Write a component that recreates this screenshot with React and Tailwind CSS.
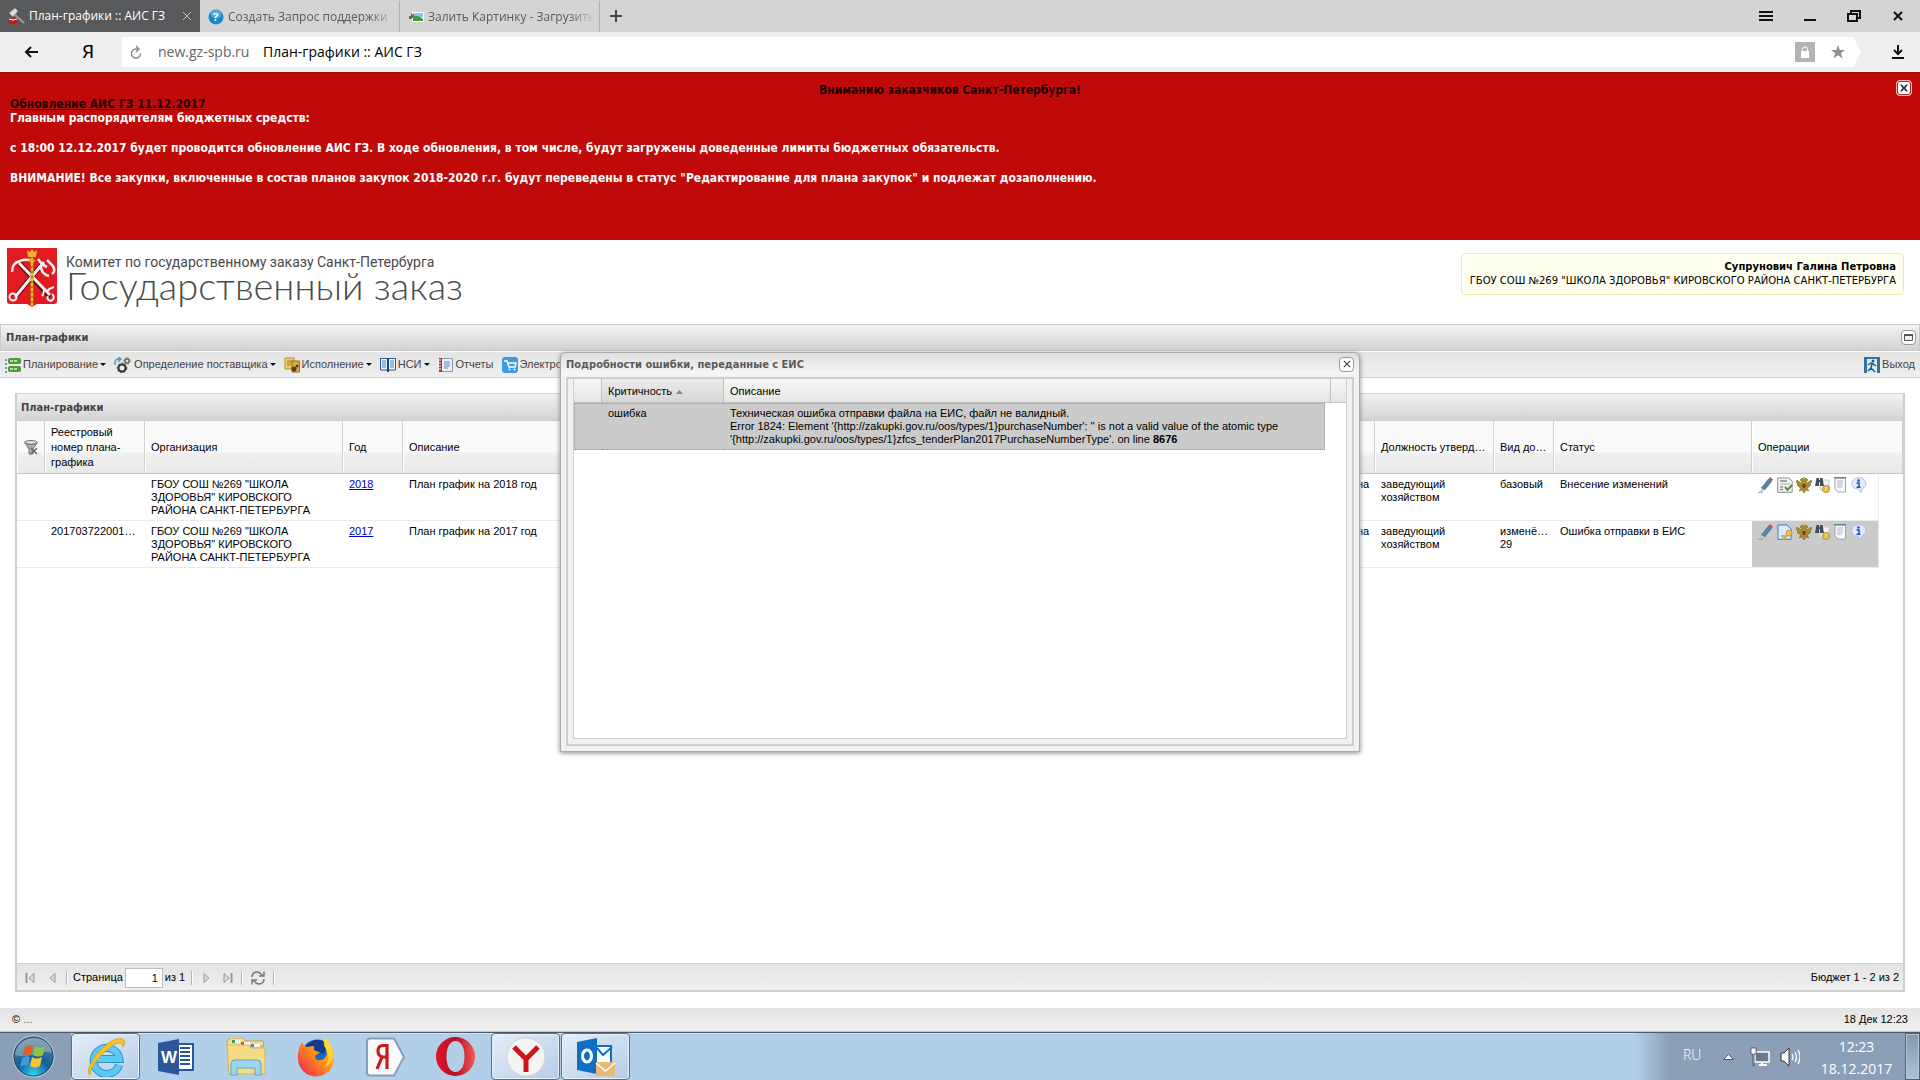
import React, { useState } from "react";

const taskbarItems = [
  { id: "ie", label: "Internet Explorer", open: true, icon: IconExplorer },
  { id: "word", label: "Word", icon: IconWord },
  { id: "files", label: "Проводник", icon: IconFolder },
  { id: "firefox", label: "Firefox", icon: IconFirefox },
  { id: "yandex", label: "Яндекс", icon: IconYandex },
  { id: "opera", label: "Opera", icon: IconOpera },
  { id: "ybrowser", label: "Яндекс.Браузер", open: true, icon: IconYBrowser },
  { id: "outlook", label: "Outlook", open: true, icon: IconOutlook },
];

const menuItems = [
  { label: "Планирование", icon: IconPlan, menu: true },
  { label: "Определение поставщика", icon: IconSupplier, menu: true },
  { label: "Исполнение", icon: IconExecution, menu: true },
  { label: "НСИ", icon: IconBook, menu: true },
  { label: "Отчеты", icon: IconReport },
  { label: "Электронный магазин", icon: IconCart },
];

const rows = [
  { number: "", year: "2018", kind: "базовый", version: "", status: "Внесение изменений", sent: false },
  { number: "201703722001722001", year: "2017", kind: "изменённый", version: "29", status: "Ошибка отправки в ЕИС", sent: true },
];

export default function App() {
  const [dialogOpen, setDialogOpen] = useState(true);
  const [bannerOpen, setBannerOpen] = useState(true);

  return (
    <div className="flex min-h-screen flex-col bg-white font-['Liberation_Sans',Arial,sans-serif] text-[11px] leading-[13px] text-black">
      <BrowserTabs />
      <AddressBar />
      <div className="relative flex flex-1 flex-col">
        {bannerOpen && <Banner onClose={() => setBannerOpen(false)} />}
        <SiteHeader />
        <PageBar />
        <Toolbar />
        <PlansPanel />
        <footer className="flex h-6 items-center justify-between border-b border-[#c8c8c8] bg-gradient-to-b from-[#e4e4e4] to-[#efefef] px-3">
          <span>© <a href="#about" className="text-[#5c7a3a]">...</a></span>
          <span>18 Дек 12:23</span>
        </footer>
        {dialogOpen && <ErrorDialog onClose={() => setDialogOpen(false)} />}
      </div>
      <Taskbar />
    </div>
  );
}

/* ---------- browser ---------- */

function BrowserTabs() {
  return (
    <header className="flex h-8 bg-[#d4d4d4] font-['Open_Sans','Noto_Sans',sans-serif] text-[12px] leading-4">
      <nav className="flex pt-px text-[#5a5a5a]">
        <div className="-mt-px flex w-[200px] items-center gap-1 bg-[#58595b] pl-2 pr-2 text-white">
          <IconHammer />
          <a href="#plans" className="flex-1 whitespace-nowrap">План-графики :: АИС ГЗ</a>
          <button aria-label="Закрыть вкладку"><Cross size={10} color="#c8c8c8" width={1} /></button>
        </div>
        <div className="flex w-[200px] items-center gap-1 border-r border-[#b0b0b0] pl-2 pr-1">
          <IconHelp />
          <a href="#support" className="flex-1 overflow-hidden whitespace-nowrap [mask-image:linear-gradient(to_right,black_85%,transparent)]">Создать Запрос поддержки</a>
        </div>
        <div className="flex w-[200px] items-center gap-1 border-r border-[#b0b0b0] pl-2 pr-1">
          <IconPicture />
          <a href="#upload" className="flex-1 overflow-hidden whitespace-nowrap [mask-image:linear-gradient(to_right,black_85%,transparent)]">Залить Картинку - Загрузить</a>
        </div>
      </nav>
      <button aria-label="Новая вкладка" className="flex w-8 items-center justify-center">
        <svg width="12" height="12"><path d="M6 0v12M0 6h12" stroke="#444" strokeWidth="2" /></svg>
      </button>
      <div className="ml-auto flex items-center">
        <button aria-label="Меню" className="flex w-11 justify-center">
          <svg width="14" height="10"><path d="M0 1h14M0 5h14M0 9h14" stroke="#111" strokeWidth="2" /></svg>
        </button>
        <button aria-label="Свернуть" className="flex w-11 justify-center">
          <svg width="12" height="10"><path d="M0 9h12" stroke="#111" strokeWidth="2" /></svg>
        </button>
        <button aria-label="Развернуть" className="flex w-11 justify-center">
          <svg width="14" height="12" fill="none" stroke="#111" strokeWidth="2"><path d="M1 4h9v7h-9zM4 4V1h9v7h-3" /></svg>
        </button>
        <button aria-label="Закрыть" className="flex w-11 justify-center"><Cross size={10} color="#111" width={2} /></button>
      </div>
    </header>
  );
}

function AddressBar() {
  return (
    <div className="flex h-10 items-center bg-[#efefef] font-['Open_Sans','Noto_Sans',sans-serif] text-[14px] leading-5">
      <button aria-label="Назад" className="flex w-[62px] justify-center">
        <svg width="14" height="12" fill="none" stroke="#111" strokeWidth="2"><path d="M14 6H2M7 1L2 6l5 5" /></svg>
      </button>
      <button aria-label="Яндекс" className="w-[52px] text-center font-['Roboto',sans-serif] text-[19px]">Я</button>
      <div className="ml-2 flex h-[30px] flex-1 items-center gap-3 bg-white pl-2 [clip-path:polygon(0_0,calc(100%-8px)_0,100%_50%,calc(100%-8px)_100%,0_100%)]">
        <button aria-label="Обновить">
          <svg width="12" height="14" fill="none" stroke="#8a8a8a" strokeWidth="1.5"><path d="M10.5 8.500a4.500 4.500 0 1 1-4.500-4.500h2M6 1l3 3-3 3" /></svg>
        </button>
        <label htmlFor="url" className="w-[97px] whitespace-nowrap pl-1 text-[#666]">new.gz-spb.ru</label>
        <input id="url" defaultValue="План-графики :: АИС ГЗ" className="flex-1 bg-transparent text-black outline-none" />
        <button aria-label="Защищено" className="mr-1 flex h-5 w-5 items-center justify-center bg-[#b4b4b4]">
          <svg width="8" height="12"><path d="M0 5h8v7H0z" fill="#fff" /><path d="M1.500 5V3.500a2.500 2.500 0 0 1 5 0V5" fill="none" stroke="#fff" /></svg>
        </button>
        <button aria-label="В закладки" className="mr-4">
          <svg width="14" height="14" viewBox="0 0 14 14"><path d="M7 0l1.800 4.900H14L9.900 8l1.600 5.400L7 10.300l-4.500 3.100L4.100 8 0 4.900h5.200z" fill="#8f8f8f" /></svg>
        </button>
      </div>
      <button aria-label="Загрузки" className="flex w-[59px] justify-center pl-[14px]">
        <svg width="12" height="14" fill="none" stroke="#111" strokeWidth="2"><path d="M6 0v8M2 5l4 4 4-4M0 13h12" /></svg>
      </button>
    </div>
  );
}

/* ---------- page ---------- */

function Banner({ onClose }) {
  return (
    <section className="relative h-[168px] border-t border-[#a00c0c] bg-[#c00909] px-[10px] pt-[10px] pr-[30px] font-['DejaVu_Sans_Condensed','DejaVu_Sans',sans-serif] text-[12px] font-bold leading-[15px] text-white">
      <h2 className="text-center leading-[14px] text-[#1c0000]">Вниманию заказчиков Санкт-Петербурга!</h2>
      <p className="leading-[14px] text-[#2a0000]"><a href="#update" className="underline">Обновление АИС ГЗ 11.12.2017</a></p>
      <p>Главным распорядителям бюджетных средств:</p>
      <p className="mt-[15px]">с 18:00 12.12.2017 будет проводится обновление АИС ГЗ. В ходе обновления, в том числе, будут загружены доведенные лимиты бюджетных обязательств.</p>
      <p className="mt-[15px]">ВНИМАНИЕ! Все закупки, включенные в состав планов закупок 2018-2020 г.г. будут переведены в статус "Редактирование для плана закупок" и подлежат дозаполнению.</p>
      <button aria-label="Закрыть" onClick={onClose}
        className="absolute right-2 top-[7px] flex h-4 w-4 items-center justify-center rounded-sm border border-[#f3b0b0] bg-white outline -outline-offset-2 outline-[#933]">
        <Cross size={8} color="#222" width={2} />
      </button>
    </section>
  );
}

function SiteHeader() {
  return (
    <div className="flex h-[84px] items-start justify-between pl-[7px] pr-4">
      <div className="flex gap-2 pt-2">
        <Emblem />
        <div className="pt-[5px] text-[#4a4a4a]">
          <p className="font-['Roboto','Open_Sans',sans-serif] text-[14px] leading-[18px]">Комитет по государственному заказу Санкт-Петербурга</p>
          <h1 className="font-['Lato','Open_Sans',sans-serif] text-[38px] font-light leading-7">Государственный заказ</h1>
        </div>
      </div>
      <div className="mt-[13px] rounded-sm border border-[#efe9a6] bg-[#fffff0] py-[6px] pl-2 pr-[7px] text-right font-['DejaVu_Sans',sans-serif] text-[10px] leading-[14px]">
        <p className="font-bold">Супрунович Галина Петровна</p>
        <p>ГБОУ СОШ №269 "ШКОЛА ЗДОРОВЬЯ" КИРОВСКОГО РАЙОНА САНКТ-ПЕТЕРБУРГА</p>
      </div>
    </div>
  );
}

function PageBar() {
  return (
    <div className="flex h-[27px] items-center justify-between border border-[#cacaca] bg-gradient-to-b from-[#f2f2f2] to-[#d3d3d3] pl-[5px] pr-[3px]">
      <h2 className="font-['DejaVu_Sans_Condensed','DejaVu_Sans',sans-serif] text-[11px] font-bold text-[#444]">План-графики</h2>
      <button aria-label="Развернуть" className="flex h-[15px] w-[15px] items-center justify-center rounded-sm border border-[#999] bg-white">
        <svg width="9" height="7"><path d="M.5 1h8v5.500h-8z" fill="#eee" stroke="#555" /><path d="M0 1h9" stroke="#555" strokeWidth="2" /></svg>
      </button>
    </div>
  );
}

function Toolbar() {
  return (
    <nav className="flex h-[27px] items-center justify-between border-y border-t-white border-b-[#d0d0d0] bg-gradient-to-b from-[#e4e4e4] to-[#efefef] pl-[5px] pr-[5px] text-[#444]">
      <div className="flex items-center gap-2">
        {menuItems.map(({ label, icon: Icon, menu }) => (
          <button key={label} className="flex items-center gap-[2px] whitespace-nowrap">
            <Icon />
            {label}
            {menu && <svg width="6" height="3"><path d="M0 0h6L3 3z" fill="#111" /></svg>}
          </button>
        ))}
      </div>
      <button className="flex items-center gap-[2px]"><IconExit />Выход</button>
    </nav>
  );
}

function HeadCell({ children, ...props }) {
  return (
    <th {...props} className="h-[53px] truncate border-b border-r border-b-[#c5c5c5] border-r-[#cfcfcf] bg-[linear-gradient(#fafafa_60%,#f0f0f0_61%,#e8e8e8)] px-[6px] text-left align-middle font-normal leading-[15px] shadow-[inset_1px_0_#fff]">
      {children}
    </th>
  );
}

function Cell({ children, className = "" }) {
  return <td className={`h-[47px] border-b border-[#ebebeb] px-[6px] align-top ${className}`}><div className="pt-1">{children}</div></td>;
}

function PlansPanel() {
  return (
    <main className="mx-[15px] mb-4 mt-[15px] flex flex-1 flex-col border-2 border-t border-[#cfcfcf]">
      <h3 className="flex h-[27px] items-center border-b border-[#cfcfcf] bg-gradient-to-b from-[#f2f2f2] to-[#d3d3d3] pl-1 font-['DejaVu_Sans_Condensed','DejaVu_Sans',sans-serif] text-[11px] font-bold text-[#444]">План-графики</h3>
      <table className="w-full table-fixed border-separate border-spacing-0">
        <colgroup>
          <col className="w-7" />
          <col className="w-[100px]" />
          <col className="w-[198px]" />
          <col className="w-[60px]" />
          <col />
          <col className="w-[164px]" />
          <col className="w-[119px]" />
          <col className="w-[60px]" />
          <col className="w-[198px]" />
          <col className="w-[127px]" />
          <col className="w-6" />
        </colgroup>
        <thead>
          <tr>
            <HeadCell aria-label="Фильтр"><IconFilter /></HeadCell>
            <HeadCell><span className="block whitespace-normal">Реестровый номер плана-графика</span></HeadCell>
            <HeadCell>Организация</HeadCell>
            <HeadCell>Год</HeadCell>
            <HeadCell>Описание</HeadCell>
            <HeadCell>Утверждающее лицо</HeadCell>
            <HeadCell>Должность утвердившего</HeadCell>
            <HeadCell>Вид документа</HeadCell>
            <HeadCell>Статус</HeadCell>
            <HeadCell colSpan={2}>Операции</HeadCell>
          </tr>
        </thead>
        <tbody>
          {rows.map((r) => (
            <tr key={r.year}>
              <Cell />
              <Cell><span className="block truncate">{r.number}</span></Cell>
              <Cell>ГБОУ СОШ №269 "ШКОЛА ЗДОРОВЬЯ" КИРОВСКОГО РАЙОНА САНКТ-ПЕТЕРБУРГА</Cell>
              <Cell><a href={`#plan-${r.year}`} className="text-[#0000cc] underline">{r.year}</a></Cell>
              <Cell>План график на {r.year} год</Cell>
              <Cell className="whitespace-nowrap">Супрунович Галина Петровна</Cell>
              <Cell>заведующий хозяйством</Cell>
              <Cell className="pr-0"><span className="block truncate">{r.kind}</span>{r.version}</Cell>
              <Cell>{r.status}</Cell>
              <Cell className={r.sent ? "border-r bg-[#cacaca]" : "border-r"}>
                <div className="-mt-px flex gap-[3px]">
                  <button aria-label="Редактировать"><IconPencil /></button>
                  <button aria-label="Документ">{r.sent ? <IconDocKey /> : <IconDocCheck />}</button>
                  <button aria-label="Отправить в ЕИС"><IconEagle /></button>
                  <button aria-label="Поиск"><IconBinoculars /></button>
                  <button aria-label="Печать"><IconSheet /></button>
                  <button aria-label="Сведения"><IconInfo /></button>
                </div>
              </Cell>
            </tr>
          ))}
        </tbody>
      </table>
      <div className="mt-auto flex h-[27px] items-center justify-between border-t border-[#cfcfcf] bg-gradient-to-b from-[#e4e4e4] to-[#efefef] pl-2 pr-1 pt-px">
        <div className="flex items-center">
          <button aria-label="Первая" className="w-[21px]"><PageArrow back edge /></button>
          <button aria-label="Предыдущая" className="w-5"><PageArrow back /></button>
          <Divider />
          <label htmlFor="page" className="ml-[5px] mr-[2px]">Страница</label>
          <input id="page" defaultValue="1" className="h-5 w-[38px] border border-[#bdbdbd] bg-white px-1 text-right outline-none" />
          <span className="ml-[2px] mr-[6px]">из 1</span>
          <Divider />
          <button aria-label="Следующая" className="ml-[10px] w-5"><PageArrow /></button>
          <button aria-label="Последняя" className="w-[18px]"><PageArrow edge /></button>
          <Divider />
          <button aria-label="Обновить" className="mx-[7px]"><IconRefresh /></button>
          <Divider />
        </div>
        <span>Бюджет 1 - 2 из 2</span>
      </div>
    </main>
  );
}

function Divider() {
  return <span className="h-[14px] w-[2px] border-l border-[#b5b5b5] bg-white" />;
}

function PageArrow({ back, edge }) {
  return (
    <svg width="10" height="12" className={back ? "rotate-180" : ""}>
      <path d="M1 1.500L6 6 1 10.500z" fill="#d8d8d8" stroke="#999" />
      {edge && <path d="M8.500 1v10" stroke="#999" strokeWidth="2" />}
    </svg>
  );
}

function ErrorDialog({ onClose }) {
  return (
    <div className="pointer-events-none absolute inset-0 flex items-center justify-center">
      <div role="dialog" aria-label="Подробности ошибки" className="pointer-events-auto flex h-[400px] w-[800px] flex-col rounded-t-md border border-[#aaa] bg-[#f1f1f1] bg-[linear-gradient(#dedede,#f6f6f6_20px,#f1f1f1_26px)] p-[5px] pt-0 shadow-[0_1px_5px_#888]">
        <div className="flex h-6 items-center justify-between pb-[2px]">
          <h3 className="font-['DejaVu_Sans_Condensed','DejaVu_Sans',sans-serif] text-[11px] font-bold text-[#5a5a5a]">Подробности ошибки, переданные с ЕИС</h3>
          <button aria-label="Закрыть" onClick={onClose} className="flex h-[15px] w-[15px] items-center justify-center rounded-sm border border-[#999] bg-white">
            <Cross size={8} color="#444" width={1.5} />
          </button>
        </div>
        <div className="flex flex-1 flex-col border-2 border-[#cfcfcf] bg-[#f1f1f1] px-[5px] pb-[5px]">
          <div className="flex-1 border border-t-0 border-[#cfcfcf] bg-white">
            <table className="w-full table-fixed border-separate border-spacing-0">
              <colgroup>
                <col className="w-7" />
                <col className="w-[122px]" />
                <col />
                <col className="w-[5px]" />
                <col className="w-4" />
              </colgroup>
              <thead>
                <tr className="h-6 bg-gradient-to-b from-[#f7f7f7] to-[#e4e4e4] text-left">
                  <th aria-label="Номер" className="border-b border-r border-[#c0c0c0] font-normal" />
                  <th className="border-b border-r border-[#c0c0c0] bg-gradient-to-b from-[#ededed] to-[#d6d6d6] px-[6px] pt-[2px] font-normal">
                    <span className="flex items-center gap-1">Критичность <svg width="7" height="4"><path d="M0 4h7L3.500 0z" fill="#888" /></svg></span>
                  </th>
                  <th colSpan={2} className="border-b border-[#c0c0c0] px-[6px] pt-[2px] font-normal">Описание</th>
                  <th aria-label="Прокрутка" className="border-b border-l border-[#c0c0c0]" />
                </tr>
              </thead>
              <tbody>
                <tr className="h-[47px] bg-[#cbcbcb]">
                  <td className="border-y border-l border-dotted border-[#999]" />
                  <td className="border-y border-dotted border-[#999] px-[6px] pt-[3px] align-top">ошибка</td>
                  <td className="border-y border-r border-dotted border-[#999] px-[6px] pt-[3px] align-top">
                    Техническая ошибка отправки файла на ЕИС, файл не валидный.<br />
                    Error 1824: Element '{"{"}http://zakupki.gov.ru/oos/types/1{"}"}purchaseNumber': '' is not a valid value of the atomic type<br />
                    '{"{"}http://zakupki.gov.ru/oos/types/1{"}"}zfcs_tenderPlan2017PurchaseNumberType'. on line <b>8676</b>
                  </td>
                  <td colSpan={2} className="bg-white" />
                </tr>
              </tbody>
            </table>
          </div>
        </div>
      </div>
    </div>
  );
}

/* ---------- desktop ---------- */

function Taskbar() {
  return (
    <div className="flex h-12 border-t border-[#4a5a6c] bg-[#b2cfea] shadow-[inset_0_1px_#d5e4f2]">
      <button aria-label="Пуск" className="flex w-[71px] items-center bg-[#8b9fb6] pl-3"><IconStart /></button>
      <div className="flex">
        {taskbarItems.map(({ id, label, open, icon: Icon }) => (
          <button key={id} aria-label={label}
            className={`mr-px flex w-[69px] items-center justify-center ${open ? "rounded-sm border border-[#5a6e85] bg-gradient-to-br from-[#e4eef8] to-[#b5cde6] shadow-[inset_0_0_0_1px_#e8f1fa]" : ""}`}>
            <Icon />
          </button>
        ))}
      </div>
      <div className="ml-auto flex w-[285px] items-stretch bg-[linear-gradient(to_right,#b2cfea,#8b9fb6_35px)] font-['Open_Sans','Noto_Sans',sans-serif] text-[14px] leading-[22px] text-white">
        <span className="ml-12 w-8 pt-[12px] font-light leading-5">RU</span>
        <button aria-label="Скрытые значки" className="w-[35px] pl-2"><svg width="11" height="6"><path d="M.5 5.500h10L5.500.5z" fill="#fff" stroke="#4b5c70" /></svg></button>
        <span className="flex items-center gap-[10px]">
          <svg width="20" height="20"><path d="M5 5h14v10H5z" fill="#68798c" stroke="#fff" strokeWidth="1.500" /><path d="M9 18h8M12 16v2" stroke="#fff" strokeWidth="2" /><path d="M1 1h5v6H4v12H3V7H1z" fill="#fff" stroke="#333" strokeWidth=".7" /></svg>
          <svg width="20" height="20" fill="none"><path d="M1 6h3l5-5v18l-5-5H1z" fill="#fff" stroke="#333" /><path d="M12 7q2 3 0 6M15 5q3 5 0 10M18 3q4 7 0 14" stroke="#fff" strokeWidth="1.300" /></svg>
        </span>
        <span className="flex flex-1 flex-col items-center pl-2 pt-[3px]"><span>12:23</span><span>18.12.2017</span></span>
        <button aria-label="Показать рабочий стол" className="w-[15px] border border-[#4f6176] bg-gradient-to-b from-[#8397ad] to-[#aec3d8] shadow-[inset_0_0_0_1px_#b9c8d8]" />
      </div>
    </div>
  );
}

/* ---------- drawings ---------- */

function Cross({ size, color, width }) {
  return <svg width={size} height={size} viewBox="0 0 10 10"><path d="M1 1l8 8M9 1l-8 8" stroke={color} strokeWidth={width} /></svg>;
}

function Emblem() {
  return (
    <svg width="51" height="60" viewBox="0 0 51 60">
      <path d="M0 0h50v53q0 3-3 3H30l-5 3-5-3H3q-3 0-3-3z" fill="#e21b22" />
      <g fill="none" stroke="#5b0b0d" strokeWidth="5"><path d="M8 49L37 14M43 49L12 15" /></g>
      <g fill="none" stroke="#f4f0f0" strokeWidth="3">
        <path d="M8 49L37 14M43 47L12 15" />
        <path d="M5 24q0-9 8-11 4-2 10-1M31 11q4 6 9 8M40 12l6 6q3 5-1 8M34 18q0 8 8 10" strokeWidth="2.500" />
        <circle cx="6" cy="49" r="3.500" strokeWidth="2" />
        <path d="M37 40q0 6-2 8M47 39q-4 1-7 4M45 46q4 4-1 7-5-1-3-5" strokeWidth="2" />
      </g>
      <path d="M25 5v53" stroke="#b8860f" strokeWidth="3" />
      <path d="M25 5v53" stroke="#f3d13d" strokeWidth="1.500" strokeDasharray="3 2" />
      <path d="M20 2l3 2 2-3 2 3 3-2-1 7h-8zM21 12h8l-4 4z" fill="#e9b528" />
    </svg>
  );
}

function IconHammer() {
  return <svg width="17" height="18"><path d="M4 5l12 11" stroke="#9a9a9a" strokeWidth="2" /><path d="M1 6l6-5 3 3-5 6z" fill="#ddd" stroke="#888" /><path d="M1 12l4-2 4 3v4H1z" fill="#c31a1a" /><path d="M1 12l4 1 4-1" stroke="#fff" fill="none" /></svg>;
}

function IconHelp() {
  return <svg width="16" height="16"><circle cx="8" cy="8" r="7.500" fill="#1b86c6" /><ellipse cx="8" cy="5" rx="5.500" ry="4" fill="#7cc6ee" opacity=".6" /><text x="5" y="12" fontSize="11" fontWeight="bold" fill="#fff">?</text></svg>;
}

function IconPicture() {
  return <svg width="16" height="14"><path d="M4 2h12v10H4z" fill="#fff" /><path d="M5 3h10v4H5z" fill="#85c4f2" /><path d="M5 7q5-3 10 2v2H5z" fill="#3d9a34" /><path d="M1 9V6h2V3l4 3-4 3z" fill="#666" /></svg>;
}

function IconPlan() {
  return (
    <svg width="16" height="16">
      <path d="M0 3h2M0 7h2M0 11h2M0 15h2" stroke="#4b7cab" strokeWidth="1.500" />
      <rect x="3" y="1" width="13" height="6" rx="2" fill="#4e9a36" /><rect x="3" y="9" width="13" height="6" rx="2" fill="#4e9a36" />
      <path d="M5 4h8M5 12h8" stroke="#b5dc9d" strokeWidth="2" strokeDasharray="3 1" />
    </svg>
  );
}

function IconSupplier() {
  return (
    <svg width="18" height="16" fill="none">
      <path d="M1 8V5q0-3 5-3M4 0l3 2-3 3" stroke="#559ac9" strokeWidth="1.500" />
      <circle cx="8" cy="11" r="3.500" stroke="#333" strokeWidth="2" /><circle cx="8" cy="11" r="4.800" stroke="#333" strokeDasharray="2 1.500" />
      <circle cx="13" cy="4" r="2" stroke="#666" strokeWidth="1.500" /><circle cx="13" cy="4" r="3.200" stroke="#666" strokeDasharray="1.500 1" />
    </svg>
  );
}

function IconExecution() {
  return (
    <svg width="16" height="16">
      <path d="M1 1h9v11H1z" fill="#f0cf68" stroke="#b78c2c" /><path d="M3 4h5M3 6h5M3 8h4" stroke="#a57a1e" />
      <path d="M8 4h7.500v11H8z" fill="#d9ae45" stroke="#936d1d" /><circle cx="10" cy="12" r="2.500" fill="#6d3415" /><circle cx="13" cy="9" r="1.500" fill="#6d3415" />
    </svg>
  );
}

function IconBook() {
  return (
    <svg width="16" height="16">
      <path d="M.5 1.500H8v13L7 13H.5zM8 1.500h7.500V13H9l-1 1.500z" fill="#e8f2fb" stroke="#27578e" />
      <path d="M2 4h4M2 6h4M2 8h4M2 10h4M10 4h4M10 6h4M10 8h4M10 10h4" stroke="#4b86c4" /><path d="M8 1v14" stroke="#1f466f" strokeWidth="2" />
    </svg>
  );
}

function IconReport() {
  return (
    <svg width="16" height="16">
      <path d="M3.500 1.500h11v13h-11z" fill="#e9f1fb" stroke="#7e96b8" /><path d="M6 5h6M6 7h6M6 9h6M6 11h4" stroke="#6586b8" />
      <path d="M1 1h3v14H1z" fill="#c22a2a" /><path d="M0 3h3M0 6h3M0 9h3M0 12h3" stroke="#fff" />
    </svg>
  );
}

function IconCart() {
  return (
    <svg width="16" height="16">
      <rect width="16" height="16" rx="3" fill="#3d9be4" />
      <path d="M2 4h3l2 6h6l1-4H6" fill="none" stroke="#fff" strokeWidth="1.500" /><circle cx="7.500" cy="12.500" r="1" fill="#fff" /><circle cx="12.500" cy="12.500" r="1" fill="#fff" />
    </svg>
  );
}

function IconExit() {
  return (
    <svg width="16" height="16">
      <path d="M0 0h16v16H0z" fill="#34749f" /><path d="M3 2h10v14H3z" fill="#dcebf4" />
      <circle cx="9" cy="4" r="1.500" fill="#1f5d89" /><path d="M4 8l3-2 2 1 3 2M8 7l-1 4-3 3M7 11l4 4" fill="none" stroke="#1f5d89" strokeWidth="1.500" />
    </svg>
  );
}

function IconFilter() {
  return (
    <svg width="16" height="16">
      <ellipse cx="8" cy="3.500" rx="6.500" ry="2" fill="#ddd" stroke="#777" /><path d="M2 4l4 6v5h4v-5l4-6q-6 3-12 0z" fill="#aaa" stroke="#777" />
      <path d="M8 9l6 6M14 9l-6 6" stroke="#666" strokeWidth="1.500" />
    </svg>
  );
}

function IconPencil() {
  return (
    <svg width="16" height="16">
      <path d="M3.500 11L10.500 2l3 2.500L6.500 13z" fill="#4f88b3" stroke="#37617f" strokeWidth=".7" />
      <path d="M10.500 2l1.500-2 3 2.500L13.500 4.500z" fill="#c4574a" />
      <path d="M3.500 11l3 2-4 2z" fill="#e4c79a" /><path d="M0 15.500q3-1 5 0" stroke="#5ba2d6" fill="none" />
    </svg>
  );
}

function IconDocCheck() {
  return (
    <svg width="16" height="16">
      <path d="M.7 1h11l3.500 3v11.300H.7z" fill="#f5f5f5" stroke="#8d8d8d" /><path d="M3 4h7M3 10h3M3 12.500h3" stroke="#8a8a8a" strokeWidth="1.500" /><path d="M3 7h10" stroke="#aaa" />
      <path d="M8 10l2.500 3L15 8" fill="none" stroke="#5c8f2f" strokeWidth="2" />
    </svg>
  );
}

function IconDocKey() {
  return (
    <svg width="16" height="16">
      <path d="M1 1h9l4 4v10.300H1z" fill="#dcecfb" stroke="#3d7cc0" /><path d="M4 12h5" stroke="#3d7cc0" />
      <circle cx="12" cy="9" r="3" fill="#f0c34c" stroke="#b8862a" strokeWidth=".7" /><path d="M10.500 11L6 15.500" stroke="#e0ac37" strokeWidth="2.500" />
    </svg>
  );
}

function IconEagle() {
  return (
    <svg width="16" height="16">
      <path d="M8 3L6 1 4 3l2 2-1 1-4-3-1 2 2 2-1 1 2 2 2 1-2 3 3-1 2 3 2-3 3 1-2-3 2-1 2-2-1-1 2-2-1-2-4 3-1-1 2-2-2-2z" fill="#a59030" stroke="#6a5a12" strokeWidth=".5" />
      <path d="M6.500 7h3v3L8 11.500 6.500 10z" fill="#a8201a" /><path d="M7 0h2v2H7z" fill="#cfae36" />
    </svg>
  );
}

function IconBinoculars() {
  return (
    <svg width="16" height="16">
      <path d="M5 3h9v10H5z" fill="#f2f2f2" stroke="#ccc" /><path d="M0 9l1.500-8h2.500V9zM5 1h2.500L9 9H5z" fill="#3f4d5c" /><path d="M3 4h3" stroke="#3f4d5c" strokeWidth="2" />
      <circle cx="11" cy="12" r="3.700" fill="#e0b94b" stroke="#ac8622" strokeWidth=".7" /><path d="M10 10.500h2M11 10v4" stroke="#f8e6a0" />
    </svg>
  );
}

function IconSheet() {
  return <svg width="14" height="16"><path d="M1 1h10.500v14H4l-3-3z" fill="#f6f8fa" stroke="#9aa4ae" /><path d="M0 .7h12" stroke="#5f87a0" strokeWidth="1.400" /><path d="M3 4h6M3 6h6M3 8h6M3 10h5" stroke="#b3bbc2" /></svg>;
}

function IconInfo() {
  return (
    <svg width="16" height="16">
      <path d="M8 .7c8 0 9 9 3 11l-1 4-2.500-3.500C-2 12-1 .7 8 .7z" fill="#e6ecff" stroke="#b7bfe2" />
      <circle cx="7.500" cy="3.500" r="1.300" fill="#1554c0" /><path d="M5.500 6h2.500v4M5.500 10.300h4" stroke="#1554c0" strokeWidth="1.500" fill="none" />
    </svg>
  );
}

function IconRefresh() {
  return (
    <svg width="16" height="16" fill="none" stroke="#777" strokeWidth="1.500">
      <path d="M2 7a5 5 0 0 1 9-3l2 2M14 1.500V6H9M14 9a5 5 0 0 1-9 3l-2-2M2 14.500V10h5" />
    </svg>
  );
}

function IconStart() {
  return (
    <svg width="43" height="43" viewBox="0 0 43 43">
      <defs><radialGradient id="orb" cx=".5" cy=".95" r=".9"><stop offset="0" stopColor="#35d5f5" /><stop offset=".45" stopColor="#12609b" /><stop offset="1" stopColor="#5e8096" /></radialGradient></defs>
      <circle cx="21.500" cy="21.500" r="20.500" fill="url(#orb)" stroke="#c5dbe8" /><circle cx="21.500" cy="21.500" r="19.500" fill="none" stroke="#244b68" />
      <path d="M3 20C5-2 38-2 40 18 28 14 18 25 3 20z" fill="#fff" opacity=".28" />
      <path d="M13 12q4-3 8-1l-2 9q-4-2-8 1z" fill="#e85c22" /><path d="M23 11q5 3 10 0l-2 9q-5 3-10 0z" fill="#8cc63f" />
      <path d="M10 23q4-3 8-1l-2 9q-4-2-8 1z" fill="#4297d6" /><path d="M20 22q5 3 10 0l-2 9q-5 3-10 0z" fill="#fbc62f" />
    </svg>
  );
}

function IconExplorer() {
  return (
    <svg width="40" height="40" viewBox="0 0 40 40" fill="none">
      <path d="M33 28A13 13 0 1 1 33.500 22H11" stroke="#2593cf" strokeWidth="8" /><path d="M33 28A13 13 0 1 1 33.500 22H11" stroke="#5bcaf2" strokeWidth="6" />
      <path d="M4 38C-4 32 22-2 36 2c3 1 3 4 1 8 0-6-7-5-15 2C12 20 4 30 4 38z" fill="#f5c42d" stroke="#d9a21b" />
    </svg>
  );
}

function IconWord() {
  return (
    <svg width="36" height="36" viewBox="0 0 36 36">
      <path d="M20 5h15v26H20z" fill="#fff" stroke="#2b579a" strokeWidth="2" /><path d="M22 9h10M22 13h10M22 17h10M22 21h10M22 25h10" stroke="#2b579a" strokeWidth="2" />
      <path d="M0 4l21-4v36L0 32z" fill="#2b579a" /><text x="3" y="24" fontSize="17" fontWeight="bold" fill="#fff">W</text>
    </svg>
  );
}

function IconFolder() {
  return (
    <svg width="40" height="38" viewBox="0 0 40 38">
      <path d="M1 3l4-3h12l2 3h18l1 5H1z" fill="#f5de8b" stroke="#c6a44b" /><path d="M6 2h8v3H6zM15 4h9v3h-9zM25 6h9v3h-9z" fill="#fff" /><path d="M6 2h3v3H6z" fill="#36a052" /><path d="M15 4h3v3h-3z" fill="#d44a2b" /><path d="M25 6h3v3h-3z" fill="#3b8fd2" />
      <path d="M1 7h22l2 3h14v26H3z" fill="#f3dc83" stroke="#d4b45d" />
      <path d="M5 26q0-4 4-4h22q4 0 4 4v11h-6v-7H11v7H5z" fill="#9bd5ee" stroke="#5ea9cc" />
    </svg>
  );
}

function IconFirefox() {
  return (
    <svg width="38" height="40" viewBox="0 0 38 40">
      <defs><linearGradient id="fox" x1="1" y1="0" x2="0" y2="1"><stop offset="0" stopColor="#ffe42e" /><stop offset=".5" stopColor="#ff8a1c" /><stop offset="1" stopColor="#ec1a57" /></linearGradient></defs>
      <circle cx="19" cy="17" r="14" fill="#1668c5" /><path d="M8 9l7-5q8-4 15 3l-3 10z" fill="#153b8b" />
      <path d="M5 5q2 5 6 5 3-1 6-1-1 3 1 5l5 1-5 4q0 5 6 4 8-2 5-11Q26 7 28 0q9 9 9 21A18 18 0 0 1 1 22Q0 13 5 5z" fill="url(#fox)" />
      <path d="M28 0q-3 7 1 12 6 12-3 18 9-2 10-10Q36 8 28 0z" fill="#ffe13a" opacity=".7" />
    </svg>
  );
}

function IconYandex() {
  return (
    <svg width="40" height="40" viewBox="0 0 40 40">
      <path d="M4 1.500h24L38 20 28 38.500H4q-3 0-3-3v-31q0-3 3-3z" fill="#fafafa" stroke="#8c9eb2" strokeWidth="2" />
      <path d="M21 7v25M21 8.500h-4q-5 0-5 5.500t5 6h4M16 20l-5 12" fill="none" stroke="#c81b1b" strokeWidth="3.200" />
    </svg>
  );
}

function IconOpera() {
  return (
    <svg width="39" height="39" viewBox="0 0 39 39">
      <defs><linearGradient id="op" x1="0" x2="1"><stop offset="0" stopColor="#e3142c" /><stop offset=".5" stopColor="#b30f1f" /><stop offset="1" stopColor="#f25a5a" /></linearGradient></defs>
      <path fillRule="evenodd" d="M19.500 0a19.500 19.500 0 1 1 0 39 19.500 19.500 0 0 1 0-39zm0 4c-6 0-9 7-9 15.500S13.500 35 19.500 35s9-7 9-15.500S25.500 4 19.500 4z" fill="url(#op)" />
    </svg>
  );
}

function IconYBrowser() {
  return (
    <svg width="40" height="40" viewBox="0 0 40 40">
      <circle cx="20" cy="20" r="19" fill="#f4f4f4" stroke="#d3d3d3" /><path d="M8 10l12 12L32 10M20 20v15" fill="none" stroke="#d0141b" strokeWidth="5" />
    </svg>
  );
}

function IconOutlook() {
  return (
    <svg width="40" height="40" viewBox="0 0 40 40">
      <path d="M18 9h17v17H18z" fill="#fff" stroke="#0f6fc5" strokeWidth="2" /><path d="M21 11l6 7 9-8" fill="none" stroke="#0f6fc5" strokeWidth="2" />
      <path d="M1 5l20-4v36L1 33z" fill="#0f6fc5" /><ellipse cx="11" cy="19" rx="4.500" ry="6" fill="none" stroke="#fff" strokeWidth="3" />
      <path d="M20 25h19v14H20z" fill="#e9b877" /><path d="M20 26l9.500 8L39 26" fill="none" stroke="#fff" strokeWidth="1.500" />
    </svg>
  );
}
